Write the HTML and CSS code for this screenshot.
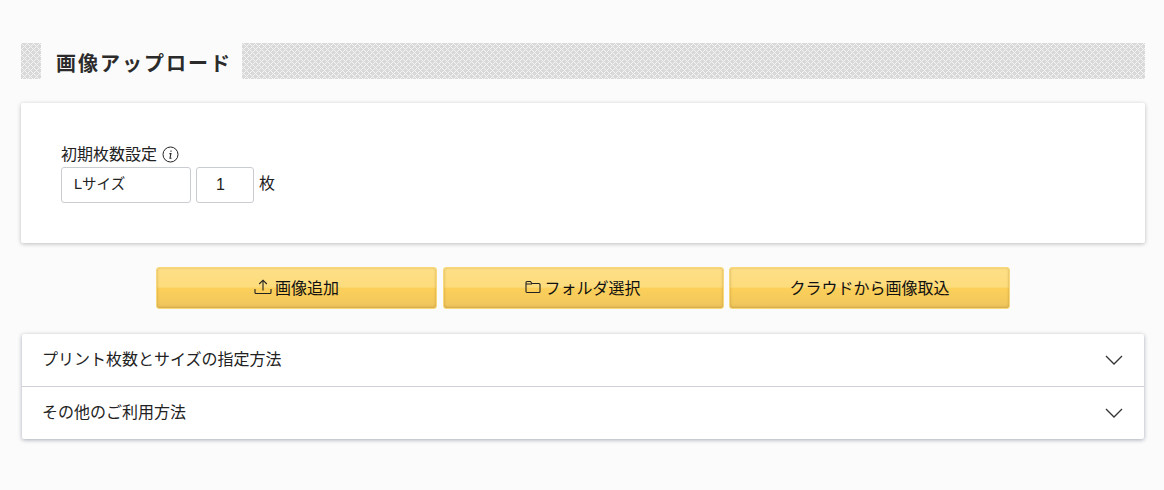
FILE: index.html
```html
<!DOCTYPE html>
<html lang="ja">
<head>
    <meta charset="UTF-8">
    <meta name="viewport" content="width=device-width, initial-scale=1.0">
    <title>画像アップロード</title>
    <link rel="stylesheet" href="styles.css">
</head>
<body>
    <div class="page">
        <h1 class="title"><span>画像アップロード</span></h1>

        <div class="card">
            <div class="label">初期枚数設定
                <svg class="info" width="17" height="17" viewBox="0 0 17 17" fill="none" stroke="#222">
                    <circle cx="8.5" cy="8.5" r="7.5"/>
                    <path d="M9 4.4v1.3M7.4 7.6h1.5L8 12.2h1.5" stroke-width="1.1"/>
                </svg>
            </div>
            <div class="fields">
                <div class="size-box">Lサイズ</div>
                <div class="count-box">1</div>
                <span class="unit">枚</span>
            </div>
        </div>

        <div class="buttons">
            <button class="btn">
                <svg width="18" height="16" viewBox="0 0 18 16" fill="none" stroke="#222" stroke-width="1.1">
                    <path d="M1 10v3.5a1 1 0 0 0 1 1h14a1 1 0 0 0 1-1V10M9 11.5V1.5M5.2 5L9 1.2 12.8 5"/>
                </svg>
                画像追加
            </button>
            <button class="btn">
                <svg width="16" height="14" viewBox="0 0 16 14" fill="none" stroke="#222" stroke-width="1.1">
                    <path d="M1 11.5V2.5a1 1 0 0 1 1-1h3.5l1.5 2h7a1 1 0 0 1 1 1v7a1 1 0 0 1-1 1H2a1 1 0 0 1-1-1zM1 4h6"/>
                </svg>
                フォルダ選択
            </button>
            <button class="btn">クラウドから画像取込</button>
        </div>

        <div class="accordion">
            <div class="row">
                <span>プリント枚数とサイズの指定方法</span>
                <svg width="18" height="10" viewBox="0 0 18 10" fill="none" stroke="#333" stroke-width="1.3"><path d="M1 1l8 8 8-8"/></svg>
            </div>
            <div class="row">
                <span>その他のご利用方法</span>
                <svg width="18" height="10" viewBox="0 0 18 10" fill="none" stroke="#333" stroke-width="1.3"><path d="M1 1l8 8 8-8"/></svg>
            </div>
        </div>
    </div>
</body>
</html>
```

FILE: styles.css
```css
* {
    box-sizing: border-box;
}

body {
    margin: 0;
    height: 490px;
    overflow: hidden;
    background-color: #fbfbfb;
    color: #222;
    font-family: "Liberation Sans", "Noto Sans CJK JP", sans-serif;
}

.page {
    padding: 43px 19px 0 21px;
}

/* Titulo con fondo de trama */
.title {
    margin: 0;
    height: 36px;
    padding-left: 20px;
    font-size: 20px;
    font-weight: 700;
    line-height: 42px;
    letter-spacing: 2px;
    color: #2b2b2b;
    background-color: #d9d9d9;
    background-image: url("data:image/svg+xml,%3Csvg xmlns='http://www.w3.org/2000/svg' width='6' height='6' shape-rendering='crispEdges'%3E%3Cpath fill='%23f4f4f4' d='M0 0h1v1H0zM1 1h1v1H1zM2 2h1v1H2zM3 3h1v1H3zM4 4h1v1H4zM5 5h1v1H5zM1 5h1v1H1zM2 4h1v1H2zM4 2h1v1H4zM5 1h1v1H5z'/%3E%3C/svg%3E");
}

.title span {
    display: block;
    width: 201px;
    height: 36px;
    padding-left: 15px;
    background-color: #fbfbfb;
}

.card {
    margin-top: 24px;
    height: 140px;
    padding: 41px 40px 0;
    background-color: #fff;
    border-radius: 2px;
    box-shadow: 0 1px 4px rgba(0, 0, 0, 0.25);
}

.label {
    display: flex;
    align-items: center;
    gap: 5px;
    height: 23px;
    font-size: 16px;
    line-height: 22px;
    padding-bottom: 2px;
}

.fields {
    display: flex;
    align-items: center;
    gap: 5px;
    font-size: 16px;
}

.size-box,
.count-box {
    height: 36px;
    background-color: #fff;
    border: 1px solid #c9cdd2;
    border-radius: 3px;
}

.size-box {
    width: 130px;
    padding-left: 12px;
    font-size: 14.5px;
    line-height: 32px;
}

.count-box {
    width: 58px;
    padding-left: 19px;
    line-height: 34px;
}

.unit {
    line-height: 34px;
    height: 36px;
}

.buttons {
    display: flex;
    justify-content: center;
    gap: 5.5px;
    margin-top: 24px;
}

.btn {
    display: flex;
    align-items: center;
    justify-content: center;
    gap: 3px;
    width: 281px;
    height: 42px;
    padding: 0 0 3px;
    color: #111;
    font-family: inherit;
    font-size: 16px;
    font-weight: 400;
    background: linear-gradient(#fedf87 0%, #fddc7c 48%, #fcd059 50%, #efc65f 100%);
    border: 1px solid #f8d878;
    border-radius: 3px;
    box-shadow: inset 0 -1px 3px rgba(150, 110, 30, 0.3), inset 0 0 2px rgba(150, 110, 30, 0.2);
}

.accordion {
    margin: 25px 1px 0;
    background-color: #fff;
    border-radius: 2px;
    box-shadow: 0 1px 4px rgba(40, 50, 80, 0.4);
}

.row {
    display: flex;
    align-items: center;
    justify-content: space-between;
    height: 52px;
    padding: 0 21px 0 20px;
    font-size: 16px;
}

.row span {
    padding-bottom: 5px;
}

.row + .row {
    height: 53px;
    border-top: 1px solid #ced1da;
}
```
